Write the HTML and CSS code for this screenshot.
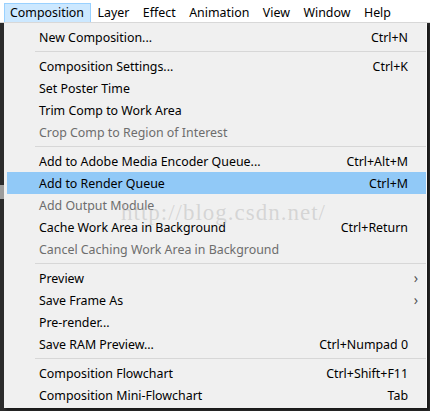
FILE: index.html
```html
<!DOCTYPE html>
<html>
<head>
<meta charset="utf-8">
<link rel="stylesheet" href="styles.css">
</head>
<body>
<div class="menubar">
  <span class="mb-item active">Composition</span>
  <span class="mb-item">Layer</span>
  <span class="mb-item">Effect</span>
  <span class="mb-item">Animation</span>
  <span class="mb-item">View</span>
  <span class="mb-item">Window</span>
  <span class="mb-item">Help</span>
</div>
<div class="stage">
  <div class="menu">
    <div class="row"><span class="label">New Composition...</span><span class="key">Ctrl+N</span></div>
    <div class="sep"></div>
    <div class="row"><span class="label">Composition Settings...</span><span class="key">Ctrl+K</span></div>
    <div class="row"><span class="label">Set Poster Time</span></div>
    <div class="row"><span class="label">Trim Comp to Work Area</span></div>
    <div class="row disabled"><span class="label">Crop Comp to Region of Interest</span></div>
    <div class="sep"></div>
    <div class="row"><span class="label">Add to Adobe Media Encoder Queue...</span><span class="key">Ctrl+Alt+M</span></div>
    <div class="row hover"><span class="label">Add to Render Queue</span><span class="key">Ctrl+M</span></div>
    <div class="row disabled"><span class="label">Add Output Module</span></div>
    <div class="row"><span class="label">Cache Work Area in Background</span><span class="key">Ctrl+Return</span></div>
    <div class="row disabled"><span class="label">Cancel Caching Work Area in Background</span></div>
    <div class="sep"></div>
    <div class="row"><span class="label">Preview</span><span class="arrow">&#x203A;</span></div>
    <div class="row"><span class="label">Save Frame As</span><span class="arrow">&#x203A;</span></div>
    <div class="row"><span class="label">Pre-render...</span></div>
    <div class="row"><span class="label">Save RAM Preview...</span><span class="key">Ctrl+Numpad 0</span></div>
    <div class="sep"></div>
    <div class="row"><span class="label">Composition Flowchart</span><span class="key">Ctrl+Shift+F11</span></div>
    <div class="row"><span class="label">Composition Mini-Flowchart</span><span class="key">Tab</span></div>
    <div class="watermark">http://blog.csdn.net/</div>
  </div>
</div>
</body>
</html>
```

FILE: styles.css
```css
html, body {
  margin: 0;
  padding: 0;
}
body {
  width: 430px;
  height: 411px;
  overflow: hidden;
  background: #2b2b2b;
  font-family: "Noto Sans", "Open Sans", sans-serif;
  font-size: 12.4px;
  color: #000;
}
.menubar {
  height: 22px;
  background: #fff;
  border-bottom: 1px solid #d8d8d8;
  display: flex;
  align-items: flex-end;
  padding-left: 4px;
}
.mb-item {
  height: 18px;
  line-height: 17px;
  padding: 0 6.5px 0 5px;
  border: 1px solid transparent;
  border-bottom: 0;
  color: #000;
}
.mb-item.active {
  background: #cce8ff;
  border-color: #99d1ff;
}
.stage {
  height: 388px;
  padding-left: 4px;
  background: linear-gradient(to bottom, #2b2b2b 0, #2b2b2b 162px, #9c9c9c 162px, #9c9c9c 176px, #2b2b2b 176px);
  background-size: 4px 100%;
  background-repeat: no-repeat;
  background-color: #2b2b2b;
}
.menu {
  position: relative;
  width: 419px;
  height: 381px;
  background: #f0f0f0;
  border-right: 1px solid #fafafa;
  padding: 3px 0 1px 3px;
  box-shadow: 2px 2px 2px rgba(0, 0, 0, 0.45);
}
.row {
  height: 22px;
  display: flex;
  align-items: center;
  padding-left: 32px;
  padding-right: 18px;
  white-space: nowrap;
}
.row .label {
  flex: 1;
}
.row.disabled {
  color: #6d6d6d;
}
.row.hover {
  background: #91c9f7;
}
.key {
  text-align: right;
}
.arrow {
  font-size: 14px;
  color: #555;
  margin-right: -10px;
  line-height: 12px;
}
.sep {
  height: 1px;
  background: #d7d7d7;
  margin: 3px 0 3px 28px;
}
.watermark {
  position: absolute;
  left: 117px;
  top: 177px;
  font-family: "Liberation Serif", "DejaVu Serif", serif;
  font-size: 23px;
  color: rgba(180, 180, 180, 0.45);
  letter-spacing: 1px;
  pointer-events: none;
}
```
